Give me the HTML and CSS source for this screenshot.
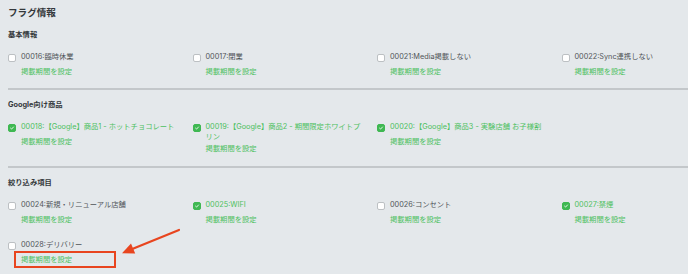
FILE: index.html
```html
<!DOCTYPE html>
<html lang="ja">
<head>
<meta charset="utf-8">
<title>フラグ情報</title>
<link rel="stylesheet" href="styles.css">
</head>
<body>
<div class="page">
  <h1 class="title">フラグ情報</h1>

  <section class="section">
    <h2 class="section-title">基本情報</h2>
    <div class="flag-grid">
      <div class="flag">
        <div class="flag-row"><span class="box"></span><span class="flag-label">00016:臨時休業</span></div>
        <a class="period-link">掲載期間を設定</a>
      </div>
      <div class="flag">
        <div class="flag-row"><span class="box"></span><span class="flag-label">00017:閉業</span></div>
        <a class="period-link">掲載期間を設定</a>
      </div>
      <div class="flag">
        <div class="flag-row"><span class="box"></span><span class="flag-label">00021:Media掲載しない</span></div>
        <a class="period-link">掲載期間を設定</a>
      </div>
      <div class="flag">
        <div class="flag-row"><span class="box"></span><span class="flag-label">00022:Sync連携しない</span></div>
        <a class="period-link">掲載期間を設定</a>
      </div>
    </div>
  </section>

  <section class="section">
    <h2 class="section-title">Google向け商品</h2>
    <div class="flag-grid">
      <div class="flag checked">
        <div class="flag-row"><span class="box"><svg viewBox="0 0 10 10"><path d="M2.6 5.2 L4.3 6.8 L7.5 3.3" /></svg></span><span class="flag-label">00018:【Google】商品1 - ホットチョコレート</span></div>
        <a class="period-link">掲載期間を設定</a>
      </div>
      <div class="flag checked">
        <div class="flag-row"><span class="box"><svg viewBox="0 0 10 10"><path d="M2.6 5.2 L4.3 6.8 L7.5 3.3" /></svg></span><span class="flag-label">00019:【Google】商品2 - 期間限定ホワイトプリン</span></div>
        <a class="period-link">掲載期間を設定</a>
      </div>
      <div class="flag checked">
        <div class="flag-row"><span class="box"><svg viewBox="0 0 10 10"><path d="M2.6 5.2 L4.3 6.8 L7.5 3.3" /></svg></span><span class="flag-label">00020:【Google】商品3 - 実験店舗 お子様割</span></div>
        <a class="period-link">掲載期間を設定</a>
      </div>
    </div>
  </section>

  <section class="section section-last">
    <h2 class="section-title">絞り込み項目</h2>
    <div class="flag-grid">
      <div class="flag">
        <div class="flag-row"><span class="box"></span><span class="flag-label">00024:新規・リニューアル店舗</span></div>
        <a class="period-link">掲載期間を設定</a>
      </div>
      <div class="flag checked">
        <div class="flag-row"><span class="box"><svg viewBox="0 0 10 10"><path d="M2.6 5.2 L4.3 6.8 L7.5 3.3" /></svg></span><span class="flag-label">00025:WIFI</span></div>
        <a class="period-link">掲載期間を設定</a>
      </div>
      <div class="flag">
        <div class="flag-row"><span class="box"></span><span class="flag-label">00026:コンセント</span></div>
        <a class="period-link">掲載期間を設定</a>
      </div>
      <div class="flag checked">
        <div class="flag-row"><span class="box"><svg viewBox="0 0 10 10"><path d="M2.6 5.2 L4.3 6.8 L7.5 3.3" /></svg></span><span class="flag-label">00027:禁煙</span></div>
        <a class="period-link">掲載期間を設定</a>
      </div>
      <div class="flag">
        <div class="flag-row"><span class="box"></span><span class="flag-label">00028:デリバリー</span></div>
        <a class="period-link">掲載期間を設定</a>
      </div>
    </div>
  </section>

  <div class="highlight-box"></div>
  <svg class="annotation-arrow" viewBox="0 0 688 274" width="688" height="274">
    <line x1="179" y1="230" x2="131" y2="249.5" />
    <polygon points="122,253.3 131,243.6 135.2,253.6" />
  </svg>
</div>
</body>
</html>
```

FILE: styles.css
```css
html, body {
  margin: 0;
  padding: 0;
  background: #e4e8eb;
  overflow: hidden;
}

.page {
  position: relative;
  width: 688px;
  height: 274px;
  padding-left: 8px;
  box-sizing: border-box;
  overflow: hidden;
  font-family: Inter, "Noto Sans CJK JP", sans-serif;
  color: #505458;
}

.title {
  margin: 5.5px 0 0;
  font-size: 9.6px;
  line-height: 14px;
  font-weight: 700;
  color: #34383b;
}

.section {
  padding: 10px 0 11.5px;
  border-bottom: 2px solid #c3c7ca;
}

.section-last {
  border-bottom: none;
}

.section-title {
  margin: 0 0 12px;
  font-size: 7.3px;
  line-height: 10px;
  font-weight: 700;
  color: #34383b;
}

.flag-grid {
  display: grid;
  grid-template-columns: repeat(4, 184.5px);
  row-gap: 15px;
}

.flag {
  padding-right: 15px;
}

.flag-row {
  display: flex;
  align-items: flex-start;
  min-height: 13px;
}

.box {
  flex: none;
  width: 8px;
  height: 8px;
  margin: 2px 5px 0 0;
  box-sizing: border-box;
  background: #ffffff;
  border: 1px solid #bcc0c3;
  border-radius: 2px;
  display: flex;
}

.box svg {
  width: 100%;
  height: 100%;
}

.box path {
  fill: none;
  stroke: #ffffff;
  stroke-width: 1.4;
  stroke-linecap: round;
  stroke-linejoin: round;
}

.checked .box {
  background: #3fb852;
  border-color: #3fb852;
}

.flag-label {
  font-size: 7.3px;
  line-height: 10px;
  max-width: 155px;
}

.checked .flag-label {
  color: #4cc060;
}

.period-link {
  display: block;
  margin: 2px 0 0 13px;
  font-size: 7.3px;
  line-height: 10px;
  color: #4cc060;
  cursor: pointer;
}

.highlight-box {
  position: absolute;
  left: 14px;
  top: 251px;
  width: 102px;
  height: 17px;
  box-sizing: border-box;
  border: 2px solid #e8451f;
}

.annotation-arrow {
  position: absolute;
  left: 0;
  top: 0;
  pointer-events: none;
}

.annotation-arrow line {
  stroke: #e8451f;
  stroke-width: 2.2;
  stroke-linecap: round;
}

.annotation-arrow polygon {
  fill: #e8451f;
}
```
